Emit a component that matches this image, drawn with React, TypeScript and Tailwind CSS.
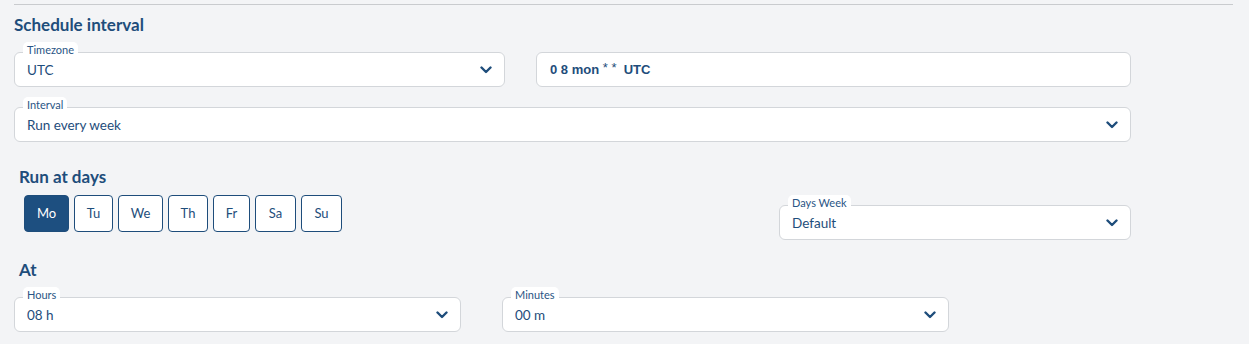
import React from 'react';

const blue = 'text-[#1e4d7b]';

const Chevron: React.FC = () => (
  <svg width="12" height="8" viewBox="0 0 12 8" className="shrink-0">
    <path d="M1.5 1.5 L6 6 L10.5 1.5" fill="none" stroke="#1e4d7b" strokeWidth="2.4" strokeLinecap="round" strokeLinejoin="round" />
  </svg>
);

const Field: React.FC<{ label?: string; value: string; width: string; select?: boolean; cron?: boolean }> = ({ label, value, width, select = true, cron }) => (
  <div className={`relative ${width} h-[35px] bg-white border border-[#d3d6da] rounded-[6px] flex items-center justify-between pl-[12px] pr-[12px]`}>
    {label && (
      <span className="absolute left-[8px] -top-[11px] bg-white rounded-t-[5px] px-[4px] pt-[1px] text-[11px] leading-[14px] text-[#2a5585]">
        {label}
      </span>
    )}
    {cron ? (
      <span className={`text-[13px] font-bold whitespace-pre ${blue} pl-[1px] pt-[1px]`} style={{ fontFamily: '"Liberation Sans", Arial, sans-serif' }}>
        0 8 mon <span className="font-normal relative -top-[2px]">* *</span>  UTC
      </span>
    ) : (
      <span className={`text-[13.5px] ${blue} pt-[2px]`}>{value}</span>
    )}
    {select && <Chevron />}
  </div>
);

const days = [
  { d: 'Mo', w: 'w-[45px]' },
  { d: 'Tu', w: 'w-[39px]' },
  { d: 'We', w: 'w-[45px]' },
  { d: 'Th', w: 'w-[40px]' },
  { d: 'Fr', w: 'w-[37px]' },
  { d: 'Sa', w: 'w-[41px]' },
  { d: 'Su', w: 'w-[41px]' },
];

export default function App() {
  return (
    <div className="w-[1249px] h-[344px] bg-[#f3f4f6] overflow-hidden" style={{ fontFamily: 'Lato, "Noto Sans", sans-serif' }}>
      <div className="pl-[14px] pt-[4px]">
        <div className="w-[1219px] border-t border-[#c9cbce]" />
        <h2 className={`mt-[10px] text-[17px] leading-[20px] font-bold ${blue}`}>Schedule interval</h2>
        <div className="mt-[17px] flex gap-[31px]">
          <Field label="Timezone" value="UTC" width="w-[491px]" />
          <Field value="" width="w-[595px]" select={false} cron />
        </div>
        <div className="mt-[20px]">
          <Field label="Interval" value="Run every week" width="w-[1117px]" />
        </div>
        <div className="flex w-[1117px] justify-between mt-[25px]">
          <div className="pl-[5px]">
            <h3 className={`text-[17px] leading-[20px] font-bold ${blue}`}>Run at days</h3>
            <div className="mt-[8px] pl-[5px] flex gap-[5px]">
              {days.map(({ d, w }, i) => (
                <button
                  key={d}
                  className={`${w} h-[37px] rounded-[4px] border border-[#1e4d7b] text-[13px] pt-[1px] ${i === 0 ? 'bg-[#1d4f80] text-white' : 'bg-white text-[#1e4d7b]'}`}
                >
                  {d}
                </button>
              ))}
            </div>
          </div>
          <div className="pt-[38px]">
            <Field label="Days Week" value="Default" width="w-[352px]" />
          </div>
        </div>
        <h3 className={`mt-[20px] pl-[5px] text-[17px] leading-[20px] font-bold ${blue}`}>At</h3>
        <div className="mt-[17px] flex gap-[41px]">
          <Field label="Hours" value="08 h" width="w-[447px]" />
          <Field label="Minutes" value="00 m" width="w-[447px]" />
        </div>
      </div>
    </div>
  );
}
